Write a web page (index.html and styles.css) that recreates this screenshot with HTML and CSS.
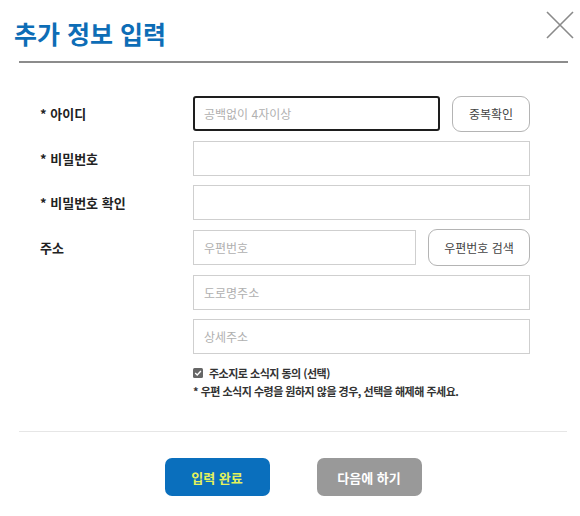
FILE: index.html
```html
<!DOCTYPE html>
<html lang="ko">
<head>
<meta charset="utf-8">
<title>추가 정보 입력</title>
<link rel="stylesheet" href="styles.css">
</head>
<body>
<div class="modal">
  <header class="modal-head">
    <h1 class="title">추가 정보 입력</h1>
    <button class="close" aria-label="닫기">
      <svg width="28" height="28" viewBox="0 0 28 28"><path d="M1 1 L27 27 M27 1 L1 27" stroke="#8a8a8a" stroke-width="1.6" fill="none"/></svg>
    </button>
  </header>
  <form class="form">
    <div class="row">
      <label class="label">* 아이디</label>
      <div class="field with-btn">
        <input class="input focus id-input" placeholder="공백없이 4자이상">
        <button type="button" class="sub-btn check-btn">중복확인</button>
      </div>
    </div>
    <div class="row">
      <label class="label">* 비밀번호</label>
      <div class="field"><input class="input" type="password"></div>
    </div>
    <div class="row">
      <label class="label">* 비밀번호 확인</label>
      <div class="field"><input class="input" type="password"></div>
    </div>
    <div class="row">
      <label class="label">주소</label>
      <div class="field with-btn">
        <input class="input zip-input" placeholder="우편번호">
        <button type="button" class="sub-btn zip-btn">우편번호 검색</button>
      </div>
    </div>
    <div class="row">
      <span class="label"></span>
      <div class="field"><input class="input" placeholder="도로명주소"></div>
    </div>
    <div class="row">
      <span class="label"></span>
      <div class="field"><input class="input" placeholder="상세주소"></div>
    </div>
    <div class="notes">
      <div class="agree"><span class="checkbox"><svg width="10" height="10" viewBox="0 0 10 10"><rect width="10" height="10" rx="1.5" fill="#666"/><path d="M2.2 5.1 L4.2 7 L7.9 3" stroke="#fff" stroke-width="1.4" fill="none"/></svg></span>주소지로 소식지 동의 (선택)</div>
      <div class="note">* 우편 소식지 수령을 원하지 않을 경우, 선택을 해제해 주세요.</div>
    </div>
  </form>
  <div class="actions">
    <button class="btn primary">입력 완료</button>
    <button class="btn secondary">다음에 하기</button>
  </div>
</div>
</body>
</html>
```
FILE: styles.css
```css
* { box-sizing: border-box; }
html, body { margin: 0; padding: 0; background: #fff; }
body {
  font-family: "Noto Sans CJK KR", "Noto Sans", sans-serif;
  color: #222;
  width: 580px;
  height: 516px;
  overflow: hidden;
}
.modal { padding: 0 12px 0 19px; }
.modal-head {
  display: flex;
  justify-content: space-between;
  align-items: flex-start;
  border-bottom: 2px solid #8c8c8c;
  height: 63px;
}
.title {
  margin: 15px 0 0 -5px;
  font-size: 25px;
  line-height: 36px;
  font-weight: 700;
  color: #0d6db6;
  letter-spacing: 0;
}
.close {
  margin: 11px -6px 0 0;
  padding: 0;
  border: 0;
  background: none;
  width: 28px;
  height: 28px;
}
.close svg { display: block; }

.form {
  display: flex;
  flex-direction: column;
  gap: 9px;
  margin-top: 32px;
  padding-left: 21px;
}
.row {
  display: grid;
  grid-template-columns: 153px 337px;
  align-items: center;
}
.row:first-child { height: 37px; }
.label {
  font-size: 13px;
  font-weight: 700;
  color: #222;
}
.field { display: flex; gap: 12px; align-items: center; }
.input {
  width: 100%;
  height: 35px;
  border: 1px solid #cfcfcf;
  padding: 0 10px;
  font-family: inherit;
  font-size: 12px;
  color: #222;
  background: #fff;
  outline: none;
}
.input::placeholder { color: #b0b0b0; }
.input.focus { border: 2px solid #1e1e1e; border-radius: 3px; padding-left: 9px; height: 35px; }
.id-input { width: 247px; }
.zip-input { width: 223px; }
.sub-btn {
  flex: 1;
  height: 37px;
  border: 1px solid #b4b4b4;
  border-radius: 9px;
  background: #fff;
  font-family: inherit;
  font-size: 12px;
  color: #444;
  padding: 0;
}
.check-btn { height: 36px; }

.notes { padding-left: 153px; margin-top: 1px; }
.agree, .note {
  font-size: 11px;
  font-weight: 700;
  color: #333;
  line-height: 18px;
  letter-spacing: -0.5px;
}
.agree { display: flex; align-items: center; }
.checkbox { display: inline-flex; margin-right: 6px; }

.actions {
  margin-top: 31px;
  border-top: 1px solid #e6e6e6;
  display: flex;
  justify-content: center;
  gap: 47px;
  padding: 26px 0 0 0;
  margin-right: 1px;
}
.btn {
  width: 105px;
  height: 38px;
  border: 0;
  border-radius: 7px;
  font-family: inherit;
  font-size: 13px;
  font-weight: 700;
}
.btn.primary { background: #0a6fbd; color: #e4f25a; }
.btn.secondary { background: #999; color: #fff; }
```
